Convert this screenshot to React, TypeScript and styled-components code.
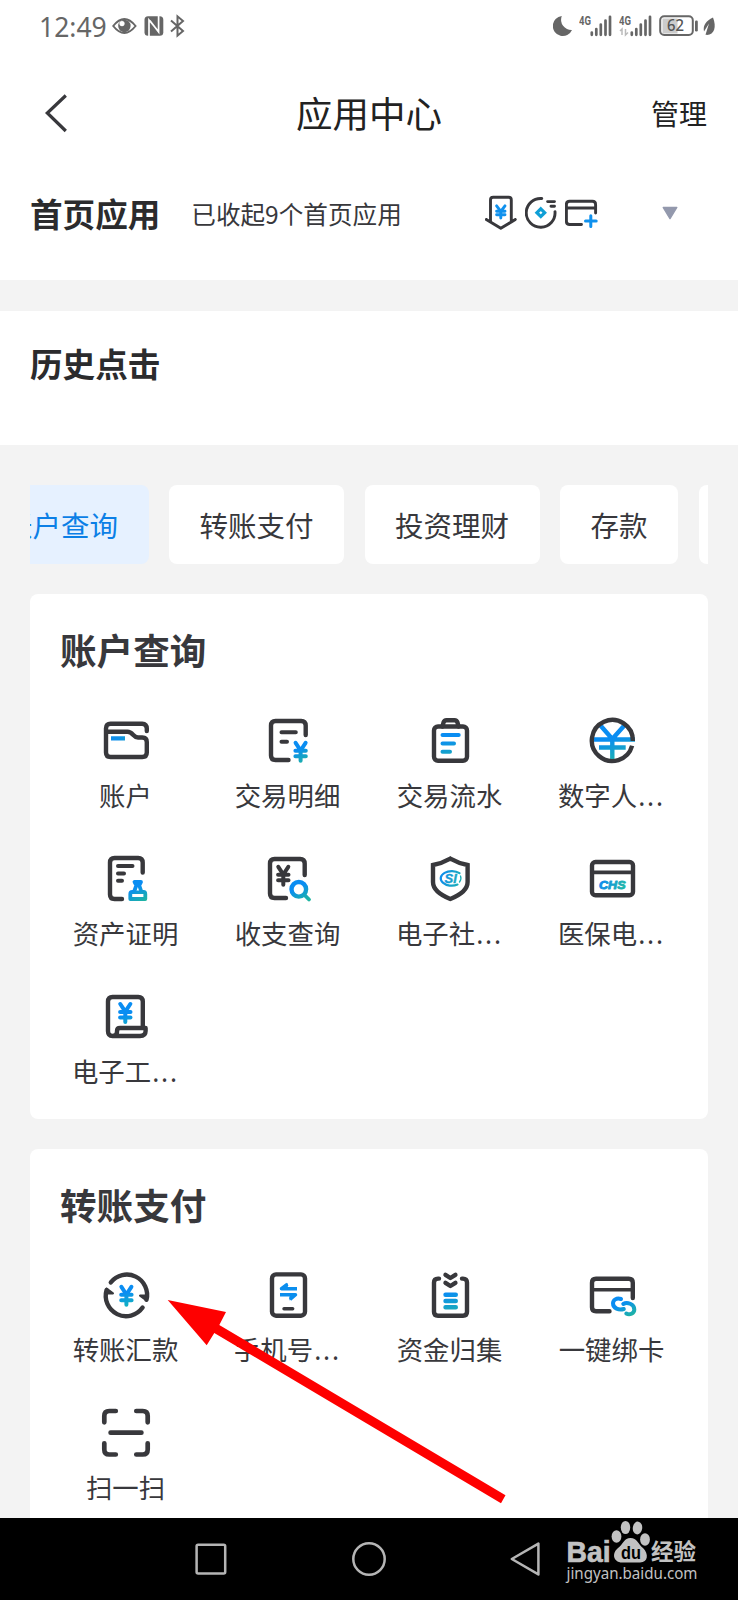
import React from "react";
import styled, { createGlobalStyle } from "styled-components";

const GlobalStyle = createGlobalStyle`
  * { box-sizing: border-box; }
  body { margin: 0; background: #f3f3f3; }
`;

const INK = "#38383c";

const Screen = styled.div`
  position: relative;
  width: 738px;
  height: 1600px;
  overflow: hidden;
  display: flex;
  flex-direction: column;
  background: #f3f3f3;
  color: ${INK};
  font-family: "Noto Sans CJK SC", sans-serif;
  white-space: nowrap;
`;

/* ---------- status bar ---------- */
const StatusBar = styled.div`
  height: 52px;
  flex: none;
  background: #fff;
  display: flex;
  align-items: center;
  padding: 0 21px 0 39px;
  color: #666;
`;
const Clock = styled.span`
  font: 400 26.5px/52px "Noto Sans", sans-serif;
  width: 73px;
  padding-top: 2px;
`;
const StatusIcons = styled.div<{ $right?: boolean }>`
  display: flex;
  align-items: center;
  margin-left: ${(p) => (p.$right ? "auto" : "0")};
`;
const StatusSvg = styled.svg`
  display: block;
  flex: none;
`;

/* ---------- header ---------- */
const Header = styled.header`
  height: 124px;
  flex: none;
  background: #fff;
  display: grid;
  grid-template-columns: 1fr auto 1fr;
  align-items: center;
  padding: 0 31px 0 44px;
  color: #222;
`;
const Title = styled.h1`
  margin: 0 13px 2px 0;
  font-size: 36.5px;
  font-weight: 400;
  line-height: 44px;
`;
const Manage = styled.span`
  justify-self: end;
  margin-bottom: 3px;
  font-size: 28px;
  line-height: 40px;
`;

/* ---------- top sections ---------- */
const HomeSection = styled.section`
  height: 104px;
  flex: none;
  background: #fff;
  padding: 0 60px 30px 30px;
  display: flex;
  align-items: center;
`;
const SectionTitle = styled.h2`
  margin: 0;
  font-size: 32.6px;
  line-height: 40px;
  font-weight: 700;
  color: #2b2b2d;
`;
const Hint = styled.span`
  margin-left: 31px;
  width: 294px;
  font-size: 24.6px;
  line-height: 36px;
`;
const MiniIcons = styled.div`
  display: flex;
  gap: 8px;
  flex: 1;
`;
const HistorySection = styled.section`
  height: 134px;
  flex: none;
  margin-top: 31px;
  padding: 32px 30px;
  background: #fff;
`;

/* ---------- tabs ---------- */
const Tabs = styled.nav`
  flex: none;
  height: 79px;
  margin: 40px 30px 30px;
  overflow: hidden;
  display: flex;
`;
const TabTrack = styled.div`
  display: flex;
  gap: 20.5px;
  margin-left: -56.5px;
`;
const Tab = styled.div<{ $active?: boolean }>`
  flex: none;
  height: 79px;
  padding: 0 30.5px;
  border-radius: 8px;
  font-size: 28.5px;
  line-height: 79px;
  background: ${(p) => (p.$active ? "#e6f1ff" : "#fff")};
  color: ${(p) => (p.$active ? "#0c7fe6" : INK)};
`;

/* ---------- cards ---------- */
const Card = styled.section<{ $height: number }>`
  flex: none;
  height: ${(p) => p.$height}px;
  margin: 0 30px 30px;
  padding: 36px 15px 0;
  border-radius: 8px;
  background: #fff;
`;
const CardTitle = styled.h2<{ $gap: number }>`
  margin: 0 0 ${(p) => p.$gap}px 15px;
  font-size: 36.6px;
  line-height: 40px;
  font-weight: 700;
`;
const Grid = styled.div`
  display: grid;
  grid-template-columns: repeat(4, 162px);
  row-gap: 39px;
`;
const AppItem = styled.div`
  height: 99px;
  display: flex;
  flex-direction: column;
  align-items: center;
`;
const AppIcon = styled.svg`
  display: block;
  flex: none;
  width: 48px;
  height: 48px;
  overflow: visible;
  fill: none;
  stroke-width: 4.4;
  stroke-linecap: round;
  stroke-linejoin: round;
`;
const AppLabel = styled.span`
  margin: 10px 1px 0 0;
  font-size: 26.4px;
  line-height: 40px;
`;
const Dots = styled.span`
  font-family: "Noto Sans", sans-serif;
  letter-spacing: 1.9px;
  margin-left: 1px;
`;

/* ---------- bottom bar and overlays ---------- */
const NavBar = styled.footer`
  position: absolute;
  left: 0;
  right: 0;
  bottom: 0;
  height: 82px;
  background: #000;
  display: flex;
  align-items: center;
  padding-left: 193px;
  gap: 121px;
`;
const Pointer = styled.svg`
  position: absolute;
  left: 160px;
  top: 1290px;
`;
const Watermark = styled.div`
  position: absolute;
  left: 565px;
  top: 1520px;
  width: 140px;
  color: #c2c2c2;
`;
const WatermarkLogo = styled.svg`
  display: block;
  overflow: visible;
`;

const Defs = () => (
  <svg width="0" height="0" style={{ display: "block" }}>
    <defs>
      <linearGradient id="blue" gradientUnits="userSpaceOnUse" x1="20" y1="8" x2="30" y2="46">
        <stop offset="0.35" stopColor="#0a8df2" />
        <stop offset="1" stopColor="#1fb5a8" />
      </linearGradient>
      <linearGradient id="blueLow" gradientUnits="userSpaceOnUse" x1="31" y1="24" x2="43" y2="46">
        <stop offset="0.35" stopColor="#0a8df2" />
        <stop offset="1" stopColor="#1fb5a0" />
      </linearGradient>
      <linearGradient id="blueMid" gradientUnits="userSpaceOnUse" x1="20" y1="10" x2="26" y2="34">
        <stop offset="0.5" stopColor="#0a8df2" />
        <stop offset="1" stopColor="#12b0c4" />
      </linearGradient>
      <linearGradient id="blueWide" gradientUnits="userSpaceOnUse" x1="10" y1="20" x2="38" y2="30">
        <stop offset="0.2" stopColor="#0f8eea" />
        <stop offset="1" stopColor="#1fb8a8" />
      </linearGradient>
    </defs>
  </svg>
);

const Yen = ({ x, y, color }: { x: number; y: number; color: string }) => (
  <path
    d={`M${x - 5} ${y + 1.8}L${x} ${y + 9.5}L${x + 5} ${y + 1.8}M${x} ${y + 9.5}V${y + 19.8}M${x - 5.2} ${y + 9.8}H${x + 5.2}M${x - 5.2} ${y + 15.3}H${x + 5.2}`}
    stroke={color}
    strokeWidth="4"
  />
);

const icons: Record<string, React.ReactNode> = {
  folder: (
    <>
      <path stroke={INK} d="M44.8 14V11.5Q44.8 6.8 40.3 6.8H8.5Q4 6.8 4 11.3V35.5Q4 40 8.5 40H40.3Q44.8 40 44.8 35.5V25Q44.8 20.5 40.3 20.5H36C31 20.5 31 14.8 25.5 14.8H5" />
      <path stroke="url(#blueWide)" strokeLinecap="butt" d="M9 21.4001L23 21.4" />
    </>
  ),
  detail: (
    <>
      <path stroke={INK} d="M41.7 18V8.5Q41.7 4 37.2 4H11.5Q7 4 7 8.5V38.5Q7 43 11.5 43H24.5" />
      <path stroke={INK} strokeWidth="4" d="M17.5 15.3H31.8M17.5 24.7H23" />
      <Yen x={36.6} y={24} color="url(#blueLow)" />
    </>
  ),
  clipboard: (
    <>
      <rect stroke={INK} x="8" y="9.5" width="33" height="34.3" rx="4" />
      <path stroke={INK} d="M16.5 9.5L17.5 5.5Q18.2 3.2 20.5 3.2H28.5Q30.8 3.2 31.5 5.5L32.5 9.5" />
      <path stroke="url(#blue)" strokeWidth="4" d="M16.5 18.1H32.7M16.5 26.4H28M16.5 34.7H24" />
    </>
  ),
  digital: (
    <g strokeLinecap="butt">
      <path stroke="url(#blue)" d="M12.5 8.5L24.3 22L36.3 8.5M24.3 21V43M6 22.5H47M11 30.5H37.7" />
      <path stroke={INK} d="M44.8 24A20.5 20.5 0 1 0 44.1 28.8" />
    </g>
  ),
  stamp: (
    <>
      <path stroke={INK} d="M40.7 17.5V7.5Q40.7 3 36.2 3H12.5Q8 3 8 7.5V39.5Q8 44 12.5 44H20" />
      <path stroke={INK} strokeWidth="4" d="M16 11H30.5M16 18.4H22M16 25.7H20" />
      <path stroke="url(#blueLow)" strokeWidth="3.8" d="M32.5 27H39L37.3 30.5L39.500 37H41.500Q43.300 37 43.300 39V44H28.300V39Q28.300 37 30.300 37H32L34.300 30.500Z" />
      <path stroke="url(#blueLow)" strokeWidth="3.6" strokeLinecap="butt" d="M30 37.3L41.500 37.301" />
    </>
  ),
  search: (
    <>
      <path stroke={INK} d="M40.700 20V8.500Q40.700 4 36.200 4H10.500Q6 4 6 8.500V38.500Q6 43 10.500 43H22" />
      <Yen x={19.3} y={10} color={INK} />
      <circle stroke="url(#blueLow)" cx="34.8" cy="34.3" r="7.3" />
      <path stroke="url(#blueLow)" strokeWidth="3.8" d="M40.5 40L45 44.5" />
    </>
  ),
  shield: (
    <>
      <path stroke={INK} strokeLinejoin="miter" d="M24.3 3.6Q33 8.5 41.6 10V27C41.6 35.5 33 40.5 24.3 44C15.6 40.5 7 35.5 7 27V10Q15.6 8.5 24.3 3.6Z" />
      <path stroke="url(#blueWide)" strokeWidth="2.2" d="M33.5 18.2A11 7.3 0 1 0 31.5 29.6" />
      <text x="18.5" y="28.3" fill="url(#blueWide)" stroke="url(#blueWide)" strokeWidth="0.4" fontFamily="Liberation Sans" fontWeight="700" fontStyle="italic" fontSize="13">SI</text>
      <path stroke="url(#blueWide)" strokeWidth="1.3" d="M34.5 21Q35.8 24 33.5 27" />
    </>
  ),
  chs: (
    <>
      <rect stroke={INK} x="4" y="7" width="41" height="33.3" rx="3.5" />
      <path stroke={INK} strokeWidth="3.6" d="M4 17.4H45" />
      <text x="11" y="33.6" fill="url(#blueWide)" stroke="url(#blueWide)" strokeWidth="0.9" textLength="26.5" lengthAdjust="spacingAndGlyphs" fontFamily="Liberation Sans" fontWeight="700" fontStyle="italic" fontSize="11.5">CHS</text>
    </>
  ),
  receipt: (
    <>
      <path stroke={INK} d="M40.800 34V8.500Q40.800 4 36.300 4H10.500Q6 4 6 8.500V38Q6 43 10.500 43H38Q43.600 43 43.600 38V35H18Q15 35 15 38V39Q15 43 10.500 43" />
      <Yen x={23.3} y={9.2} color="url(#blueMid)" />
    </>
  ),
  transfer: (
    <>
      <path stroke={INK} d="M8.8 11.4A20.3 20.3 0 0 1 44.5 28.8" />
      <path stroke={INK} d="M40.6 36.6A20.3 20.3 0 0 1 4.6 19" />
      <path fill={INK} stroke={INK} strokeWidth="2" d="M38 24.6H45L44.5 29.5ZM11 22.4H4.5L4.6 17.5Z" />
      <Yen x={24.4} y={14} color="url(#blueMid)" />
    </>
  ),
  phone: (
    <>
      <rect stroke={INK} x="8" y="3.4" width="33" height="41.3" rx="4" />
      <path stroke={INK} strokeWidth="3.4" d="M20 37.7H28.7" />
      <path stroke="#0b8eee" strokeWidth="3.5" strokeLinecap="butt" d="M33 17.7H17.5L23.5 13.2M16 23.7H31.5L26 28.3" />
      <path fill="#0b8eee" d="M17 18L23.8 12V18ZM32 23.5L25.5 29.6V23.5Z" />
    </>
  ),
  collect: (
    <>
      <path stroke={INK} d="M13 7.6H12Q8 7.6 8 11.6V40.7Q8 44.7 12 44.7H37Q41 44.7 41 40.7V11.6Q41 7.6 37 7.6H36" />
      <path stroke={INK} d="M19.5 3.8L24.4 7L29.4 3.8M19.5 11.8L24.4 15L29.4 11.8" />
      <path stroke="url(#blue)" d="M19.5 23.8H29.8M19.5 30H29.8M19.5 36.3H29.8" />
    </>
  ),
  bind: (
    <>
      <path stroke={INK} d="M44.800 27V11.700Q44.800 7.700 40.800 7.700H8Q4 7.700 4 11.700V36.300Q4 40.300 8 40.300H21.500" />
      <path stroke={INK} strokeWidth="3.6" d="M4 18.8H45" />
      <path stroke="url(#blueLow)" strokeWidth="4" d="M33 28C28.5 26.5 25 29 25 32.3C25 37.5 31 39.5 35.8 38" />
      <path stroke="url(#blueLow)" strokeWidth="4" d="M35.3 33C39 30.6 46.3 33 46.3 38.5C46.3 42.5 41.5 44.5 38.3 42.5" />
    </>
  ),
  scan: (
    <path stroke={INK} strokeWidth="4.7" d="M2.3 13.3V7Q2.3 2 7.3 2H13.8M34.3 2H40.7Q45.7 2 45.7 7V13.3M2.3 34.3V40.5Q2.3 45.5 7.3 45.5H13.8M34.3 45.5H40.7Q45.7 45.5 45.7 40.5V34.3M8.6 23.7H39.4" />
  ),
};

type AppEntry = { icon: string; label: string; cut?: boolean };

const accountApps: AppEntry[] = [
  { icon: "folder", label: "账户" },
  { icon: "detail", label: "交易明细" },
  { icon: "clipboard", label: "交易流水" },
  { icon: "digital", label: "数字人", cut: true },
  { icon: "stamp", label: "资产证明" },
  { icon: "search", label: "收支查询" },
  { icon: "shield", label: "电子社", cut: true },
  { icon: "chs", label: "医保电", cut: true },
  { icon: "receipt", label: "电子工", cut: true },
];

const payApps: AppEntry[] = [
  { icon: "transfer", label: "转账汇款" },
  { icon: "phone", label: "手机号", cut: true },
  { icon: "collect", label: "资金归集" },
  { icon: "bind", label: "一键绑卡" },
  { icon: "scan", label: "扫一扫" },
];

type AppCardProps = { title: string; apps: AppEntry[]; height: number; gap: number };

const AppCard = ({ title, apps, height, gap }: AppCardProps) => (
  <Card $height={height}>
    <CardTitle $gap={gap}>{title}</CardTitle>
    <Grid>
      {apps.map((a) => (
        <AppItem key={a.label}>
          <AppIcon viewBox="0 0 48 48">{icons[a.icon]}</AppIcon>
          <AppLabel>
            {a.label}
            {a.cut && <Dots>...</Dots>}
          </AppLabel>
        </AppItem>
      ))}
    </Grid>
  </Card>
);

const Signal = ({ data }: { data?: boolean }) => (
  <StatusSvg width="40" height="24" viewBox="0 0 40 24">
    <text x="0" y="11.2" fill="#666" fontFamily="Roboto" fontWeight="700" fontSize="13" textLength="12" lengthAdjust="spacingAndGlyphs">4G</text>
    {data && <path d="M3 21V15L1 17M6.5 15V21L9 18.5" stroke="#bbb" strokeWidth="1.5" fill="none" />}
    <path d="M12.8 18.5V20.8M17.3 15V20.8M21.8 10.5V20.8M26.5 6.5V20.8M31 2.8V20.8" stroke="#666" strokeWidth="2.7" strokeLinecap="round" />
  </StatusSvg>
);

export default function App() {
  return (
    <Screen>
      <GlobalStyle />
      <Defs />
      <StatusBar>
        <Clock>12:49</Clock>
        <StatusIcons>
          <StatusSvg width="74" height="24" viewBox="0 0 74 24" fill="none" stroke="#666">
            <path d="M1.2 12Q12.3-2 23.6 12Q12.3 26 1.2 12Z" strokeWidth="1.9" />
            <circle cx="12.4" cy="12" r="6.2" fill="#666" stroke="none" />
            <circle cx="10" cy="9.6" r="2.6" fill="#fff" stroke="none" />
            <rect x="32.5" y="2.3" width="18.8" height="19.4" rx="3.5" fill="#666" stroke="none" />
            <path d="M37 22V6L46.500 17.500M37.800 6.500L46.600 18V2" stroke="#fff" strokeWidth="1.7" />
            <path d="M59 6.5L71 17L65.5 21.7V2.3L71 7L59 17.5" strokeWidth="2" />
          </StatusSvg>
        </StatusIcons>
        <StatusIcons $right>
          <StatusSvg width="26" height="24" viewBox="0 0 26 24">
            <path d="M8.8 2.1A10 10 0 1 0 19 16A10.2 10.2 0 0 1 8.8 2.1Z" fill="#666" />
          </StatusSvg>
          <Signal />
          <Signal data />
          <StatusSvg width="58" height="24" viewBox="0 0 58 24">
            <rect x="3.5" y="4.5" width="15" height="15" fill="#ccc" />
            <rect x="1.2" y="2.3" width="32.6" height="18.6" rx="4" fill="none" stroke="#666" strokeWidth="2" />
            <text x="8" y="17.4" fill="#555" fontFamily="Noto Sans" fontWeight="500" fontSize="16" textLength="17" lengthAdjust="spacingAndGlyphs">62</text>
            <rect x="36" y="6.5" width="2.8" height="11" rx="1.2" fill="#666" />
            <path d="M54 3.5C47 7 43.8 11 45 17.5L50 9.5L46.5 20.8C55 22 58 13.5 54 3.5Z" fill="#666" />
          </StatusSvg>
        </StatusIcons>
      </StatusBar>

      <Header>
        <StatusSvg width="24" height="40" viewBox="0 0 24 40" fill="none" stroke="#38383c" strokeWidth="3.2">
          <path d="M21.8 1.5L3.3 19L21.8 37" />
        </StatusSvg>
        <Title>应用中心</Title>
        <Manage>管理</Manage>
      </Header>

      <HomeSection>
        <SectionTitle>首页应用</SectionTitle>
        <Hint>已收起9个首页应用</Hint>
        <MiniIcons>
          <StatusSvg width="32" height="36" viewBox="0 0 32 36" fill="none" stroke={INK} strokeWidth="2.9" strokeLinecap="round" strokeLinejoin="round">
            <path d="M1.3 24.5L5.5 27V5Q5.5 2.3 8.2 2.3H23.6Q26.3 2.3 26.3 5V27L30.3 24.5M1.3 24.5L15.8 33.3L30.3 24.5" />
            <path d="M11.6 10.8L15.8 16.3L20 10.8M15.8 16.3V23M11.6 16.2H20M11.6 19.8H20" stroke="#0f91ee" />
          </StatusSvg>
          <StatusSvg width="32" height="36" viewBox="0 0 32 36" fill="none" stroke={INK} strokeWidth="2.9" strokeLinecap="round">
            <path d="M16.8 3.5A14.4 14.4 0 1 0 30 16.7M22.6 6.6H29.5M26 11.3H29.5" />
            <path d="M15.8 13.8L19.7 17.7L15.8 21.6L11.9 17.7Z" stroke="#0f9fd6" strokeWidth="3.2" />
          </StatusSvg>
          <StatusSvg width="34" height="36" viewBox="0 0 34 36" fill="none" stroke={INK} strokeWidth="2.9" strokeLinecap="round">
            <path d="M30.6 18V9.5Q30.6 6.3 27.4 6.3H4.6Q1.4 6.3 1.4 9.5V26.3Q1.4 29.5 4.6 29.5H16.5M1.4 13H30.6" />
            <path d="M25.8 20.8V31.5M20.5 26H31.2" stroke="#0f91ee" strokeWidth="3" />
          </StatusSvg>
        </MiniIcons>
        <StatusSvg width="16" height="15" viewBox="0 0 16 15">
          <path d="M1.2 1.5H14.8L8 12.6Z" fill="#9399ad" stroke="#9399ad" strokeWidth="1.4" strokeLinejoin="round" />
        </StatusSvg>
      </HomeSection>

      <HistorySection>
        <SectionTitle>历史点击</SectionTitle>
      </HistorySection>

      <Tabs>
        <TabTrack>
          <Tab $active>账户查询</Tab>
          <Tab>转账支付</Tab>
          <Tab>投资理财</Tab>
          <Tab>存款</Tab>
          <Tab />
        </TabTrack>
      </Tabs>

      <AppCard title="账户查询" apps={accountApps} height={525} gap={47} />
      <AppCard title="转账支付" apps={payApps} height={420} gap={46} />

      <Pointer width="350" height="220" viewBox="160 1290 350 220">
        <path d="M167.7 1300L226 1312L219.3 1325L505.5 1495.3L501 1503.3L214.3 1333L206.7 1345.3Z" fill="#fe0000" />
      </Pointer>

      <NavBar>
        <StatusSvg width="36" height="36" viewBox="0 0 36 36">
          <rect x="3.6" y="3.8" width="28.6" height="28.6" rx="1.5" fill="none" stroke="#b5b5b5" strokeWidth="2.5" />
        </StatusSvg>
        <StatusSvg width="38" height="38" viewBox="0 0 38 38">
          <circle cx="19" cy="19" r="15.7" fill="none" stroke="#b5b5b5" strokeWidth="2.5" />
        </StatusSvg>
        <StatusSvg width="34" height="36" viewBox="0 0 34 36">
          <path d="M2.8 18L29.4 2.6V33.4Z" fill="none" stroke="#b5b5b5" strokeWidth="2.5" strokeLinejoin="round" />
        </StatusSvg>
      </NavBar>

      <Watermark>
        <WatermarkLogo width="140" height="64" viewBox="0 0 140 64" fill="#c2c2c2">
          <text x="1.5" y="41.5" stroke="#c2c2c2" strokeWidth="0.7" fontFamily="Liberation Sans" fontWeight="700" fontSize="30" textLength="44" lengthAdjust="spacingAndGlyphs">Bai</text>
          <ellipse cx="51.5" cy="16.5" rx="4.9" ry="6.2" />
          <ellipse cx="60.5" cy="7.5" rx="4.7" ry="6.6" />
          <ellipse cx="72.5" cy="8" rx="4.7" ry="6.4" transform="rotate(8 72.5 8)" />
          <ellipse cx="80" cy="19.5" rx="4.9" ry="6.2" />
          <path d="M65.5 18C59 18 58.5 24 53 28C46 34 49 42.5 57 42.5H75C83 42.5 84 34 78 28C73 24 72 18 65.5 18Z" />
          <text x="56" y="38.5" fill="#000" fontFamily="Liberation Sans" fontWeight="700" fontSize="18" textLength="20" lengthAdjust="spacingAndGlyphs">du</text>
          <text x="86" y="39.5" fontFamily="Noto Sans CJK SC" fontWeight="700" fontSize="23" textLength="45" lengthAdjust="spacingAndGlyphs">经验</text>
          <text x="1.5" y="59.3" fontFamily="Noto Sans" fontSize="16" textLength="131" lengthAdjust="spacingAndGlyphs">jingyan.baidu.com</text>
        </WatermarkLogo>
      </Watermark>
    </Screen>
  );
}
